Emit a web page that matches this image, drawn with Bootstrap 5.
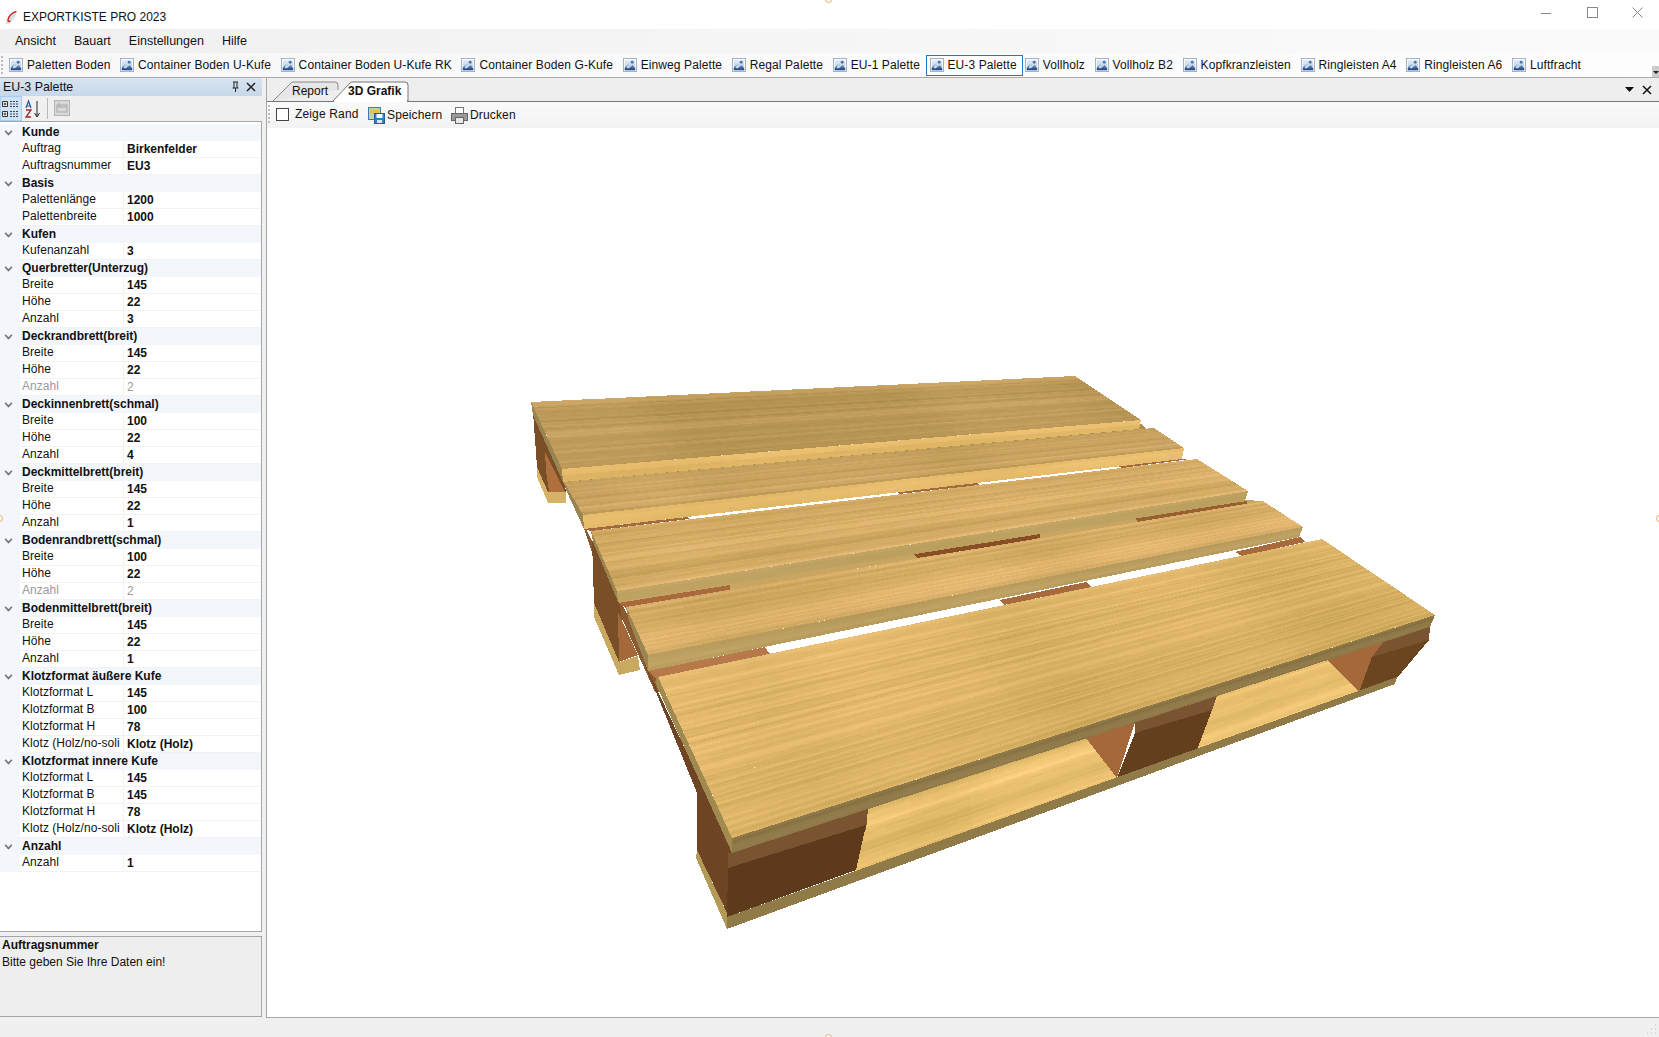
<!DOCTYPE html>
<html lang="de"><head><meta charset="utf-8"><title>EXPORTKISTE PRO 2023</title>
<link href="https://cdn.jsdelivr.net/npm/bootstrap@5.3.0/dist/css/bootstrap.min.css" rel="stylesheet">
<style>
html,body{height:100%;overflow:hidden}
body{font:12px/17px "Liberation Sans",Arial,sans-serif;color:#111;background:#f0f0f0}
.app{height:1037px;position:relative}
.ttl{height:29px;background:#fff;padding:6px 0 0 5px;gap:6px}
.wc{position:absolute;top:0;right:0;height:26px;width:137px}
.wc svg{display:block;position:absolute;top:7px}
.menubar{height:24px;background:linear-gradient(90deg,#f0f0f0,#fbfbfb);padding-left:15px;gap:18px;font-size:12.5px}
.tbar{height:25px;background:linear-gradient(90deg,#f7f7f7,#fdfdfd);border-bottom:1px solid #aaa;position:relative;padding-left:5px}
.tb-it{display:flex;align-items:center;gap:4px;padding:0 4px;height:21px;margin-right:1.6px;white-space:nowrap;letter-spacing:.1px}
.tb-it.sel{border:1px solid #1e78c8;background:#fff;margin:0 -2px 0 0;padding:0 5px 0 3px}
.grip{width:3px;height:18px;border-left:2px dotted #bbb;position:absolute;left:1px;top:3px}
.ovf{position:absolute;right:0;bottom:0;width:7px;height:11px;background:#ccc}
.ovf::after{content:"";position:absolute;left:1px;top:5px;border:3px solid transparent;border-top-color:#222;border-bottom:0}
.work{height:940px;gap:4px}
.leftp{width:262px;flex:none}
.ptitle{height:18px;line-height:19px;background:linear-gradient(#d8e4f1,#c7d8ea);padding:0 3px;font-size:12.4px;position:relative}
.ptitle svg{position:absolute;top:3px}
.ptools{height:25px;background:#f0f0f0;position:relative}
.ptools svg{position:absolute}
.pgrid{height:811px;background:#fff;border:1px solid #a6a6a6;border-left:0;padding-top:2px}
.grp{height:17px;padding-left:22px;font-weight:700;line-height:16px;background:#f3f6fb;position:relative}
.grp::before{content:"";position:absolute;left:5px;top:4px;width:7px;height:7px;border-right:2px solid #777;border-bottom:2px solid #777;transform:rotate(45deg) scale(.8)}
.prow{display:flex;height:17px;line-height:15px;background:#f3f6fb;padding-left:20px}
.prow span{width:104px;flex:none;padding-left:2px;background:#fff;border-bottom:1px solid #f2f2f2;border-right:1px solid #f2f2f2;white-space:nowrap;letter-spacing:.05px}
.prow b{flex:1;padding-left:3px;background:#fff;border-bottom:1px solid #f2f2f2;line-height:17px}
.prow.dis span,.prow.dis b{color:#9a9a9a;font-weight:400}
.pdesc{height:81px;margin-top:4px;background:#eee;border:1px solid #a6a6a6;border-left:0;padding:0 2px;line-height:17px}
.pdesc strong{display:block}
.rightp{background:#fff;border-left:1px solid #a6a6a6;border-bottom:1px solid #a6a6a6}
.tabs{height:24px;background:#eee;border-bottom:1px solid #777;position:relative;flex:none}
.rtools{height:26px;background:linear-gradient(#fafafa,#f2f2f2);position:relative;flex:none}
.rtools>*{position:absolute}
.chk{left:9px;top:6px;width:13px;height:13px;border:1px solid #444;background:#fff}
.view{flex:1;position:relative;background:#fff;min-height:0}
.view svg{position:absolute;left:0;top:0}
.tabtxt{position:absolute;top:5px}
.tabs svg{position:absolute;left:0;top:0}
.stat{height:19px;background:#f0f0f0}
.dot{position:absolute;width:7px;height:7px;border-radius:50%;border:1px solid #f0a868;background:#fff}
.rsz{position:absolute;right:2px;bottom:2px;width:12px;height:12px}
</style></head><body>
<svg width="0" height="0" class="position-absolute"><defs>
<linearGradient id="sky" x1="0" y1="0" x2="0" y2="1"><stop offset="0" stop-color="#e6eef8"/><stop offset="1" stop-color="#aac4e4"/></linearGradient>
<linearGradient id="hill" x1="0" y1="0" x2="0" y2="1"><stop offset="0" stop-color="#7d9cc8"/><stop offset="1" stop-color="#17407f"/></linearGradient>
<symbol id="pic" viewBox="0 0 16 16"><rect x=".5" y=".5" width="15" height="15" fill="#fff" stroke="#9aa9bd"/><rect x="2" y="2" width="12" height="12" fill="url(#sky)"/><path d="M2 14v-3l4-4 3 3 2-2 3 4v2z" fill="url(#hill)"/><path d="M6 7l3 3-3 2-2-1z" fill="#c9d8ec"/><circle cx="10.500" cy="4.800" r="1.700" fill="#4a76b4"/></symbol>
</defs></svg>
<div class="app d-flex flex-column">
 <div class="ttl d-flex align-items-center">
  <svg width="12" height="14" viewBox="0 0 12 14"><path d="M11.500.500C6 1.500 1.500 6 .5 13.500c4 0 9-4 11-13z" fill="#dcdfdf"/><path d="M11.500.500C8 1 3.500 4.500 3 9c-.2 1.500 1 2 2.300.800" fill="none" stroke="#cc1f1a" stroke-width="1.300"/></svg>
  <span>EXPORTKISTE PRO 2023</span>
  <div class="wc">
   <svg style="left:18px" width="12" height="12"><path d="M1 6.500h10" stroke="#888"/></svg>
   <svg style="left:65px" width="12" height="12"><rect x=".5" y=".5" width="10" height="10" fill="none" stroke="#888"/></svg>
   <svg style="left:110px" width="12" height="12"><path d="M.5.500l10 10m0-10l-10 10" stroke="#888"/></svg>
  </div>
 </div>
 <div class="menubar d-flex align-items-center"><span>Ansicht</span><span>Bauart</span><span>Einstellungen</span><span>Hilfe</span></div>
 <div class="tbar d-flex align-items-center"><i class="grip"></i>
  <div class="tb-it"><svg width="14" height="14"><use href="#pic"/></svg>Paletten Boden</div>
  <div class="tb-it"><svg width="14" height="14"><use href="#pic"/></svg>Container Boden U-Kufe</div>
  <div class="tb-it"><svg width="14" height="14"><use href="#pic"/></svg>Container Boden U-Kufe RK</div>
  <div class="tb-it"><svg width="14" height="14"><use href="#pic"/></svg>Container Boden G-Kufe</div>
  <div class="tb-it"><svg width="14" height="14"><use href="#pic"/></svg>Einweg Palette</div>
  <div class="tb-it"><svg width="14" height="14"><use href="#pic"/></svg>Regal Palette</div>
  <div class="tb-it"><svg width="14" height="14"><use href="#pic"/></svg>EU-1 Palette</div>
  <div class="tb-it sel"><svg width="14" height="14"><use href="#pic"/></svg>EU-3 Palette</div>
  <div class="tb-it"><svg width="14" height="14"><use href="#pic"/></svg>Vollholz</div>
  <div class="tb-it"><svg width="14" height="14"><use href="#pic"/></svg>Vollholz B2</div>
  <div class="tb-it"><svg width="14" height="14"><use href="#pic"/></svg>Kopfkranzleisten</div>
  <div class="tb-it"><svg width="14" height="14"><use href="#pic"/></svg>Ringleisten A4</div>
  <div class="tb-it"><svg width="14" height="14"><use href="#pic"/></svg>Ringleisten A6</div>
  <div class="tb-it"><svg width="14" height="14"><use href="#pic"/></svg>Luftfracht</div>
  <i class="ovf"></i>
 </div>
 <div class="work d-flex">
  <div class="leftp d-flex flex-column">
   <div class="ptitle">EU-3 Palette
    <svg style="left:230px" width="10" height="12"><path d="M3 1h5M4 1v6M7 1v6M2.500 7h6M5.500 7v4" stroke="#222" fill="none"/></svg>
    <svg style="left:245px" width="12" height="12"><path d="M2 2l8 8m0-8l-8 8" stroke="#222" stroke-width="1.500"/></svg>
   </div>
   <div class="ptools">
    <svg style="left:0;top:0" width="22" height="25"><rect x=".5" y=".5" width="21" height="24" fill="#cfe3f7" stroke="#a8cdf0"/><path d="M2.500 5.500h5v5h-5zM2.500 15.500h5v5h-5z" fill="#fff" stroke="#333"/><path d="M3.500 8h3M5 6.500v3M3.500 18h3M5 16.500v3" stroke="#333"/><path d="M10 5.500h9M10 8h9M10 10.500h9M10 15.500h9M10 18h9M10 20.500h9" stroke="#445" stroke-dasharray="2 1"/></svg>
    <svg style="left:24px;top:3px" width="20" height="21"><path d="M2 9l2.500-7L7 9M3 7h3" stroke="#2a4fa8" fill="none" stroke-width="1.200"/><path d="M2 11h5l-5 7h5" stroke="#9c2a2a" fill="none" stroke-width="1.300"/><path d="M13 2v15M10.500 14l2.500 4 2.500-4" stroke="#222" fill="none"/></svg>
    <svg style="left:47px;top:2px" width="2" height="21"><path d="M.5 0v21" stroke="#b8b8b8"/></svg>
    <svg style="left:54px;top:4px" width="17" height="17"><rect x=".5" y=".5" width="15" height="15" fill="#d8d8d8" stroke="#b5b5b5"/><rect x="3" y="5" width="10" height="7" fill="none" stroke="#aaa"/><path d="M3 7h10M5 3v4" stroke="#aaa"/></svg>
   </div>
   <div class="pgrid">
<div class="grp">Kunde</div>
<div class="prow"><span>Auftrag</span><b>Birkenfelder</b></div>
<div class="prow"><span>Auftragsnummer</span><b>EU3</b></div>
<div class="grp">Basis</div>
<div class="prow"><span>Palettenlänge</span><b>1200</b></div>
<div class="prow"><span>Palettenbreite</span><b>1000</b></div>
<div class="grp">Kufen</div>
<div class="prow"><span>Kufenanzahl</span><b>3</b></div>
<div class="grp">Querbretter(Unterzug)</div>
<div class="prow"><span>Breite</span><b>145</b></div>
<div class="prow"><span>Höhe</span><b>22</b></div>
<div class="prow"><span>Anzahl</span><b>3</b></div>
<div class="grp">Deckrandbrett(breit)</div>
<div class="prow"><span>Breite</span><b>145</b></div>
<div class="prow"><span>Höhe</span><b>22</b></div>
<div class="prow dis"><span>Anzahl</span><b>2</b></div>
<div class="grp">Deckinnenbrett(schmal)</div>
<div class="prow"><span>Breite</span><b>100</b></div>
<div class="prow"><span>Höhe</span><b>22</b></div>
<div class="prow"><span>Anzahl</span><b>4</b></div>
<div class="grp">Deckmittelbrett(breit)</div>
<div class="prow"><span>Breite</span><b>145</b></div>
<div class="prow"><span>Höhe</span><b>22</b></div>
<div class="prow"><span>Anzahl</span><b>1</b></div>
<div class="grp">Bodenrandbrett(schmal)</div>
<div class="prow"><span>Breite</span><b>100</b></div>
<div class="prow"><span>Höhe</span><b>22</b></div>
<div class="prow dis"><span>Anzahl</span><b>2</b></div>
<div class="grp">Bodenmittelbrett(breit)</div>
<div class="prow"><span>Breite</span><b>145</b></div>
<div class="prow"><span>Höhe</span><b>22</b></div>
<div class="prow"><span>Anzahl</span><b>1</b></div>
<div class="grp">Klotzformat äußere Kufe</div>
<div class="prow"><span>Klotzformat L</span><b>145</b></div>
<div class="prow"><span>Klotzformat B</span><b>100</b></div>
<div class="prow"><span>Klotzformat H</span><b>78</b></div>
<div class="prow"><span>Klotz (Holz/no-soli</span><b>Klotz (Holz)</b></div>
<div class="grp">Klotzformat innere Kufe</div>
<div class="prow"><span>Klotzformat L</span><b>145</b></div>
<div class="prow"><span>Klotzformat B</span><b>145</b></div>
<div class="prow"><span>Klotzformat H</span><b>78</b></div>
<div class="prow"><span>Klotz (Holz/no-soli</span><b>Klotz (Holz)</b></div>
<div class="grp">Anzahl</div>
<div class="prow"><span>Anzahl</span><b>1</b></div>
   </div>
   <div class="pdesc"><strong>Auftragsnummer</strong>Bitte geben Sie Ihre Daten ein!</div>
  </div>
  <div class="rightp flex-grow-1 d-flex flex-column">
   <div class="tabs">
    <svg width="340" height="24"><path d="M6 23L24 5q1-1 3-1h41q3 0 3 3v5" fill="#e6e6e6" stroke="#888"/><path d="M66 23L83 5q1-1 3-1h52q3 0 3 3v16z" fill="#fff" stroke="#777"/><path d="M67 23h73" stroke="#fff" stroke-width="2"/></svg>
    <span class="tabtxt" style="left:25px">Report</span><b class="tabtxt" style="left:81px">3D Grafik</b>
    <svg style="left:1358px;top:8px" width="10" height="7"><path d="M0 1h9L4.500 6z" fill="#111"/></svg>
    <svg style="left:1374px;top:6px" width="12" height="12"><path d="M2 2l8 8m0-8l-8 8" stroke="#111" stroke-width="1.500"/></svg>
   </div>
   <div class="rtools">
    <i class="grip"></i><i class="chk"></i>
    <span style="left:28px;top:4px;letter-spacing:.15px">Zeige Rand</span>
    <svg style="left:101px;top:5px" width="17" height="17"><rect x=".5" y=".5" width="12" height="12" fill="#bcd9a0" stroke="#3a78b8"/><rect x="2" y="2" width="9" height="5" fill="#e8c050"/><rect x="6.500" y="6.500" width="10" height="10" fill="#2f7fc4" stroke="#1d5f9e"/><rect x="8.500" y="7" width="6" height="4" fill="#fff"/><rect x="9" y="13" width="5" height="3" fill="#d5e6f5"/></svg>
    <span style="left:120px;top:5px;letter-spacing:.15px">Speichern</span>
    <svg style="left:184px;top:5px" width="17" height="17"><rect x="4.500" y=".5" width="8" height="6" fill="#fff" stroke="#777"/><rect x=".5" y="6.500" width="16" height="7" fill="#9a9a9a" stroke="#666"/><rect x="4.500" y="10.500" width="8" height="6" fill="#e8e8e8" stroke="#666"/></svg>
    <span style="left:203px;top:5px;letter-spacing:.15px">Drucken</span>
   </div>
   <div class="view"><svg id="wood" width="1392" height="889" viewBox="267 128 1392 889" shape-rendering="crispEdges"></svg></div>
  </div>
 </div>
 <div class="stat"></div>
 <i class="dot" style="left:825px;top:-4px"></i><i class="dot" style="left:825px;bottom:-4px"></i>
 <i class="dot" style="left:-4px;top:515px"></i><i class="dot" style="right:-4px;top:515px"></i>
 <svg class="rsz" viewBox="0 0 12 12"><path d="M10 2h1M6 6h1M10 6h1M2 10h1M6 10h1M10 10h1" stroke="#bbb"/></svg>
</div>
<script>
(function(){
var s=document.getElementById('wood'),o=[];
var seed=7;function R(){seed=(seed*16807)%2147483647;return seed/2147483647}
function P(pts,c){o.push('<polygon points="'+pts.map(function(p){return p[0].toFixed(1)+','+p[1].toFixed(1)}).join(' ')+'" fill="'+c+'"/>')}
function L(a,b,t){return [a[0]+(b[0]-a[0])*t,a[1]+(b[1]-a[1])*t]}
function col(c,f){return 'rgb('+[0,1,2].map(function(i){var g=i==2?(f-1)*1.8+1:f;return Math.max(0,Math.min(255,Math.round(c[i]*g)))}).join(',')+')'}
function noise(n,k){var a=[],i,v=[];for(i=0;i<n+k+2;i++)v.push(R());for(i=0;i<n;i++){var p=Math.floor(i/k),f=i/k-p;f=f*f*(3-2*f);a.push(v[p]+(v[p+1]-v[p])*f)}return a}
function wood(q,base,N,M,amp){
 var a=q[0],b=q[1],c=q[2],d=q[3];
 var n1=noise(N,Math.max(2,N>>2)),n2=noise(N,2),n3=noise(N,1),nl=noise(M,6);
 for(var i=0;i<N;i++){
  var t0=i/N,t1=(i+1)/N,gv=(n1[i]-.5)*.7+(n2[i]-.5)*.5+(n3[i]-.5)*.22;
  var e0=L(a,d,t0),e1=L(a,d,t1),f0=L(b,c,t0),f1=L(b,c,t1);
  for(var j=0;j<M;j++){
   var u0=j/M,u1=(j+1.08)/M;if(u1>1)u1=1;
   var w=1+gv*amp+(nl[j]-.5)*amp*.35+(R()-.5)*amp*.14;
   P([L(e0,f0,u0),L(e0,f0,u1),L(e1,f1,u1),L(e1,f1,u0)],col(base,w));
  }
 }
}
var BR='#7a4e26',DK='#5d3a1b',MID='#a5683a',EDGE='#8f7a48',SL='#a36a3f';
/* back-left block */
P([[533,412],[563,475],[566,492],[548,492],[537,467]],BR);
P([[545,452],[563,488],[565,492],[549,492],[546,470]],'#b0703e');
P([[537,467],[548,492],[566,492],[566,503],[548,503],[537,477]],'#d6b368');
/* stringer along the left side */
P([[562,478],[664,692],[655,692],[592,552],[584,528]],'#8a5a30');
/* middle-left block */
P([[592,540],[620,604],[624,640],[619,662],[594,603]],BR);
P([[618,612],[638,655],[619,662]],'#a5683a');
P([[594,603],[619,662],[638,656],[640,670],[619,675],[594,617]],'#c9a860');
/* front-left block */
P([[643,660],[732,848],[729,917],[697,850],[697,793]],'#6e4424');
P([[697,850],[728,915],[727,929],[696,858]],'#b39a58');
/* bottom board */
wood([[866,805],[1090,735],[1117,778],[856,871]],[230,190,110],26,20,.16);
wood([[1212,695],[1326,658],[1359,692],[1197,750]],[230,190,110],20,14,.16);
/* blocks */
P([[728,853],[868,809],[866,830],[728,868]],'#7a5430');
P([[728,868],[866,825],[856,870],[727,917]],DK);
P([[1086,738],[1135,722],[1117,778]],MID);
P([[1135,722],[1217,696],[1212,710],[1135,733]],'#7a5430');
P([[1135,733],[1212,710],[1197,750],[1117,778]],'#643f1e');
P([[1326,659],[1385,640],[1359,692]],MID);
P([[1385,640],[1430,626],[1429,640],[1372,657]],'#7a5430');
P([[1372,657],[1429,640],[1397,678],[1359,692]],'#6b4520');
/* bottom board front */
P([[727,917],[1397,677],[1395,684],[727,929]],EDGE);
/* what shows through the gaps */
P([[563,482],[1141,424],[1182,459],[584,529]],'#b08a4e');
P([[618,602],[1245,500],[1263,501],[626,607]],'#c8a662');
P([[584,529],[687,517],[689,519],[591,531]],SL);
P([[897,492],[977,483],[979,485],[899,494]],SL);
P([[1118,466],[1182,459],[1190,459],[1122,468]],SL);
P([[618,603],[730,585],[730,590],[626,608]],'#a86a3c');
P([[913,553],[1040,533],[1040,539],[917,558]],'#8a4e26');
P([[1134,518],[1247,501],[1247,504],[1138,522]],'#9a5e30');
P([[648,671],[765,647],[770,654],[657,679]],'#b8794a');
P([[1000,600],[1086,582],[1091,587],[1004,605]],'#a86a3c');
P([[1235,552],[1300,537],[1305,542],[1242,556]],'#a86a3c');
function board(top,front,left,c,fc,lc,N){
 P(left,lc);
 wood(front,fc,Math.max(4,N>>4),36,.1);
 wood(top,c,N,48,.18);
}
board([[531,402],[1075,376],[1141,420],[562,469]],[[562,469],[1141,420],[1139,429],[563,482]],[[531,402],[562,469],[563,482],[533,415]],[194,158,94],[230,188,108],'#9a8450',70);
board([[564,482],[1154,428],[1184,448],[583,515]],[[583,515],[1184,448],[1182,459],[584,529]],[[564,482],[583,515],[584,529],[566,490]],[200,162,96],[232,190,110],'#9a8450',42);
board([[591,531],[1197,459],[1248,491],[617,591]],[[617,591],[1248,491],[1245,501],[618,602]],[[591,531],[617,591],[618,602],[593,542]],[210,170,100],[188,160,96],'#9a8450',64);
board([[626,607],[1263,501],[1303,527],[648,655]],[[648,655],[1303,527],[1299,537],[648,671]],[[626,607],[648,655],[648,671],[628,618]],[218,176,106],[182,154,92],'#9a8450',54);
board([[658,677],[1322,539],[1435,615],[732,838]],[[732,838],[1435,615],[1430,627],[732,853]],[[658,677],[732,838],[732,853],[655,682]],[228,186,110],[142,120,72],'#a08a50',150);
s.innerHTML=o.join('');
})();
</script>
<script src="https://cdn.jsdelivr.net/npm/bootstrap@5.3.0/dist/js/bootstrap.bundle.min.js"></script>
</body></html>
